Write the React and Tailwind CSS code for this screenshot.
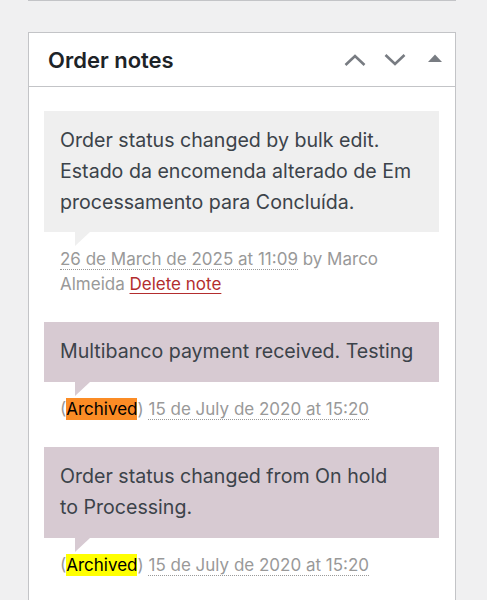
import React from "react";

const font = { fontFamily: "Inter, 'Noto Sans', sans-serif" };

function Arrow({ color }) {
  return (
    <span
      className="absolute left-[31px] top-full h-0 w-0 border-solid"
      style={{
        borderWidth: "14px 15px 0 0",
        borderColor: `${color} transparent transparent transparent`,
      }}
    />
  );
}

function DateAbbr({ children }) {
  return (
    <abbr className="cursor-help border-b border-dotted border-[#999] [text-decoration:none]">
      {children}
    </abbr>
  );
}

export default function App() {
  return (
    <div className="min-h-[600px] w-[487px] bg-[#f0f0f1] overflow-hidden" style={font}>
      <div className="ml-[28px] mr-[31px] h-px bg-[#c3c4c7]" />
      <div className="ml-[28px] mr-[31px] mt-[31px] border border-[#c3c4c7] bg-white min-h-[600px]">
        <div className="flex h-[54px] items-center border-b border-[#c3c4c7] pl-[19px] pr-[13px]">
          <h2 className="flex-1 pt-[2px] text-[22px] font-semibold text-[#1d2327]">Order notes</h2>
          <svg width="22" height="12" viewBox="0 0 22 12" className="mr-[18px]" fill="none" stroke="#787c82" strokeWidth="2.6">
            <path d="M1.5 11 L11 2 L20.5 11" />
          </svg>
          <svg width="22" height="12" viewBox="0 0 22 12" className="mr-[22px]" fill="none" stroke="#787c82" strokeWidth="2.6">
            <path d="M1.5 1 L11 10 L20.5 1" />
          </svg>
          <svg width="14" height="8" viewBox="0 0 14 8" className="mb-[3px]">
            <path d="M0 8 L7 0.5 L14 8 Z" fill="#787c82" />
          </svg>
        </div>
        <ul className="pl-[15px] pr-[16px] pt-[24px]">
          <li className="mb-[25px]">
            <div className="relative bg-[#efefef] px-[16px] pt-[14px] pb-[14px] text-[19.6px] leading-[31px] text-[#3c434a]">
              Order status changed by bulk edit.<br />
              Estado da encomenda alterado de Em<br />
              processamento para Concluída.
              <Arrow color="#efefef" />
            </div>
            <p className="mt-[15px] px-[16px] text-[17px] leading-[25px] text-[#999]">
              <DateAbbr>26 de March de 2025 at 11:09</DateAbbr> by Marco<br />
              Almeida <a href="#" className="text-[#b32d2e] underline decoration-1 underline-offset-[3px]">Delete note</a>
            </p>
          </li>
          <li className="mb-[25px]">
            <div className="relative bg-[#d7cad2] px-[16px] pt-[14px] pb-[15px] text-[19.6px] leading-[31px] text-[#3c434a]">
              Multibanco payment received. Testing
              <Arrow color="#d7cad2" />
            </div>
            <p className="mt-[15px] px-[16px] text-[17px] leading-[25px] text-[#999]">
              (<span className="bg-[#fb8c25] py-[1px] text-black">Archived</span>) <DateAbbr>15 de July de 2020 at 15:20</DateAbbr>
            </p>
          </li>
          <li className="mb-[24px]">
            <div className="relative bg-[#d7cad2] px-[16px] pt-[14px] pb-[15px] text-[19.6px] leading-[31px] text-[#3c434a]">
              Order status changed from On hold<br />
              to Processing.
              <Arrow color="#d7cad2" />
            </div>
            <p className="mt-[15px] px-[16px] text-[17px] leading-[25px] text-[#999]">
              (<span className="bg-[#ffff00] py-[1px] text-black">Archived</span>) <DateAbbr>15 de July de 2020 at 15:20</DateAbbr>
            </p>
          </li>
        </ul>
      </div>
    </div>
  );
}
